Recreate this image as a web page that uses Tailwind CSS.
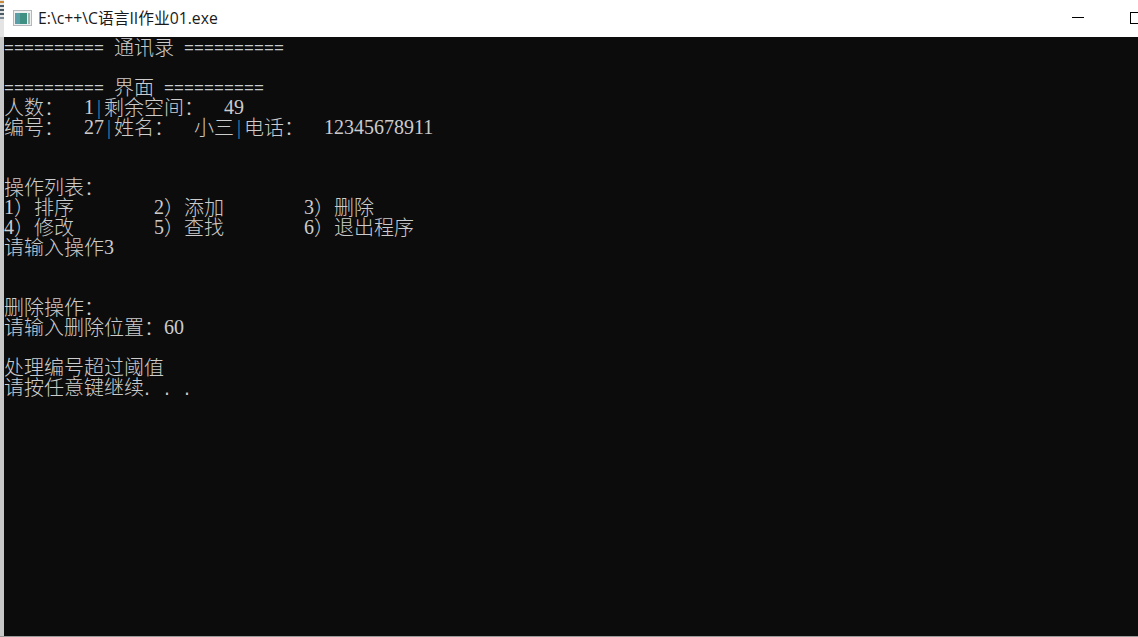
<!DOCTYPE html>
<html lang="zh">
<head>
<meta charset="utf-8">
<title>C语言II作业01</title>
<script src="https://cdn.jsdelivr.net/npm/@tailwindcss/browser@4"></script>
</head>
<body class="bg-[#0c0c0c]">
<div class="relative flex flex-col h-[637px] w-[1138px] overflow-hidden border-b border-[#9a9a9a]">
  <header class="flex items-center h-[37px] pl-[9px] bg-white shrink-0 border-l-[4px] border-[#e4e4e4]">
    <svg width="20" height="16" viewBox="0 0 20 16" class="shrink-0 -mt-px">
      <rect x="0.5" y="0.5" width="18" height="15" fill="#eef0f0" stroke="#b4b8bc"/>
      <rect x="2" y="3" width="12" height="11" fill="#3f8f83"/>
      <rect x="2" y="3" width="5" height="11" fill="#5a9fa8"/>
      <rect x="15" y="3" width="2" height="11" fill="#9fb5b0"/>
    </svg>
    <div class="ml-[5px] -mt-[2px] text-[15.75px] leading-[20px] text-[#1a1a1a] whitespace-pre" style="font-family:'Open Sans','Noto Sans CJK SC',sans-serif">E:\c++\C语言II作业01.exe</div>
    <div class="ml-auto flex items-center h-full">
      <div class="w-[12px] h-px bg-black mr-[46px] -mt-[2px]"></div>
      <div class="w-[12px] h-[12px] border border-black -mr-[4px] -mt-[2px]"></div>
    </div>
  </header>
  <main class="flex-1 pt-px border-l-[4px] border-[#c8c8c8] text-[#cccccc] text-[20px] leading-5 font-light [word-spacing:5px]" style="font-family:'Liberation Serif','Noto Sans CJK SC',serif">
    <div class="h-5 whitespace-pre"><span class="relative -top-[2px] text-[16.67px] [word-spacing:0] font-['Liberation_Mono']">========== </span>通讯录<span class="relative -top-[2px] text-[16.67px] [word-spacing:0] font-['Liberation_Mono']"> ==========</span></div>
    <div class="h-5"></div>
    <div class="h-5 whitespace-pre"><span class="relative -top-[2px] text-[16.67px] [word-spacing:0] font-['Liberation_Mono']">========== </span>界面<span class="relative -top-[2px] text-[16.67px] [word-spacing:0] font-['Liberation_Mono']"> ==========</span></div>
    <div class="h-5 whitespace-pre">人数：<span class="relative -top-px">  1</span><span class="relative -top-px inline-block w-[10px] text-center text-[#2f8fb0]">|</span>剩余空间：<span class="relative -top-px">  49</span></div>
    <div class="h-5 whitespace-pre">编号：<span class="relative -top-px">  27</span><span class="relative -top-px inline-block w-[10px] text-center text-[#2f8fb0]">|</span>姓名：  小三<span class="relative -top-px inline-block w-[10px] text-center text-[#2f8fb0]">|</span>电话：<span class="relative -top-px">  12345678911</span></div>
    <div class="h-5"></div>
    <div class="h-5"></div>
    <div class="h-5 whitespace-pre">操作列表：</div>
    <div class="h-5 whitespace-pre"><span class="relative -top-px">1</span>）排序        <span class="relative -top-px">2</span>）添加        <span class="relative -top-px">3</span>）删除</div>
    <div class="h-5 whitespace-pre"><span class="relative -top-px">4</span>）修改        <span class="relative -top-px">5</span>）查找        <span class="relative -top-px">6</span>）退出程序</div>
    <div class="h-5 whitespace-pre">请输入操作<span class="relative -top-px">3</span></div>
    <div class="h-5"></div>
    <div class="h-5"></div>
    <div class="h-5 whitespace-pre">删除操作：</div>
    <div class="h-5 whitespace-pre">请输入删除位置：<span class="relative -top-px">60</span></div>
    <div class="h-5"></div>
    <div class="h-5 whitespace-pre">处理编号超过阈值</div>
    <div class="h-5 whitespace-pre">请按任意键继续<span class="-ml-[2px] text-[16.67px] [word-spacing:0] font-['Liberation_Mono']">. . .</span></div>
  </main>
  <div class="absolute left-0 top-0 flex flex-col gap-[2px] w-[4px] pt-[1px]">
    <div class="h-[2px] bg-[#c98a3a]"></div>
    <div class="h-[2px] bg-[#4a5a66]"></div>
    <div class="h-[2px] bg-[#4a5a66]"></div>
    <div class="h-[2px] bg-[#4a5a66]"></div>
    <div class="h-[2px] bg-[#7a8a96]"></div>
  </div>
</div>
</body>
</html>
